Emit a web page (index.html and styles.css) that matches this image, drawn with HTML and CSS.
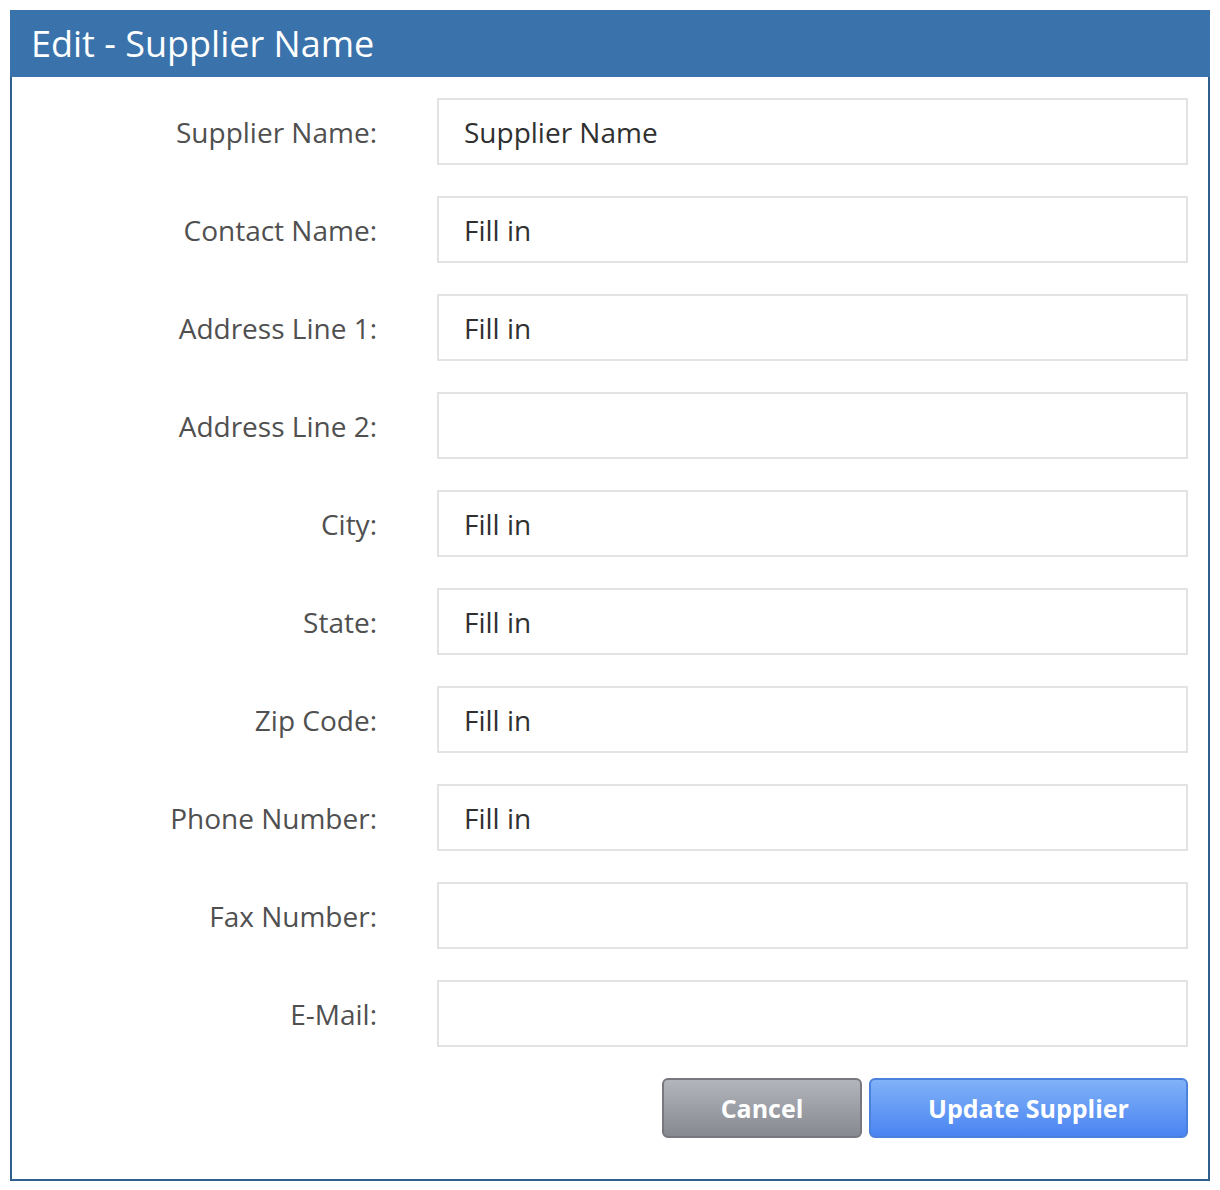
FILE: index.html
```html
<!DOCTYPE html>
<html lang="en">
<head>
    <meta charset="UTF-8">
    <meta name="viewport" content="width=device-width, initial-scale=1.0">
    <title>Edit - Supplier Name</title>
    <link rel="stylesheet" href="styles.css">
</head>
<body>
    <div class="panel">
        <div class="panel-header">Edit - Supplier Name</div>

        <form class="supplier-form">
            <label class="field-label" for="supplierName">Supplier Name:</label>
            <input class="field-input" id="supplierName" type="text" value="Supplier Name">

            <label class="field-label" for="contactName">Contact Name:</label>
            <input class="field-input" id="contactName" type="text" value="Fill in">

            <label class="field-label" for="address1">Address Line 1:</label>
            <input class="field-input" id="address1" type="text" value="Fill in">

            <label class="field-label" for="address2">Address Line 2:</label>
            <input class="field-input" id="address2" type="text" value="">

            <label class="field-label" for="city">City:</label>
            <input class="field-input" id="city" type="text" value="Fill in">

            <label class="field-label" for="state">State:</label>
            <input class="field-input" id="state" type="text" value="Fill in">

            <label class="field-label" for="zip">Zip Code:</label>
            <input class="field-input" id="zip" type="text" value="Fill in">

            <label class="field-label" for="phone">Phone Number:</label>
            <input class="field-input" id="phone" type="text" value="Fill in">

            <label class="field-label" for="fax">Fax Number:</label>
            <input class="field-input" id="fax" type="text" value="">

            <label class="field-label" for="email">E-Mail:</label>
            <input class="field-input" id="email" type="text" value="">

            <div class="form-actions">
                <button type="button" class="btn btn-cancel">Cancel</button>
                <button type="button" class="btn btn-update">Update Supplier</button>
            </div>
        </form>
    </div>
</body>
</html>
```

FILE: styles.css
```css
body {
    font-family: 'Open Sans', 'Noto Sans', sans-serif;
    background-color: #fff;
    margin: 10px;
}

.panel {
    width: 1200px;
    box-sizing: border-box;
    border: 2px solid #2f5f8f;
    border-top: none;
    background-color: #fff;
}

.panel-header {
    background-color: #3a73ab;
    color: #fff;
    font-size: 36px;
    height: 67px;
    line-height: 67px;
    margin: 0 -2px;
    padding-left: 21px;
    padding-right: 2px;
}

.supplier-form {
    display: grid;
    grid-template-columns: 365px 1fr;
    column-gap: 60px;
    row-gap: 31px;
    align-items: center;
    padding: 21px 20px 41px 0;
}

.field-label {
    text-align: right;
    font-size: 28px;
    color: #505050;
}

.field-input {
    font-family: 'Open Sans', 'Noto Sans', sans-serif;
    font-size: 28px;
    color: #303030;
    height: 67px;
    box-sizing: border-box;
    border: 2px solid #e3e3e3;
    border-radius: 0;
    padding: 0 25px;
    outline: none;
    width: 100%;
}

.form-actions {
    grid-column: 1 / 3;
    display: flex;
    justify-content: flex-end;
    gap: 7px;
}

.btn {
    font-family: 'Open Sans', 'Noto Sans', sans-serif;
    font-size: 25px;
    font-weight: bold;
    color: #fff;
    height: 60px;
    border-radius: 6px;
    cursor: pointer;
}

.btn-cancel {
    width: 200px;
    background: linear-gradient(#b2b5bb, #868990);
    border: 2px solid #76787d;
}

.btn-update {
    width: 319px;
    background: linear-gradient(#80b2f7, #4a84f2);
    border: 2px solid #4b80dc;
}
```
